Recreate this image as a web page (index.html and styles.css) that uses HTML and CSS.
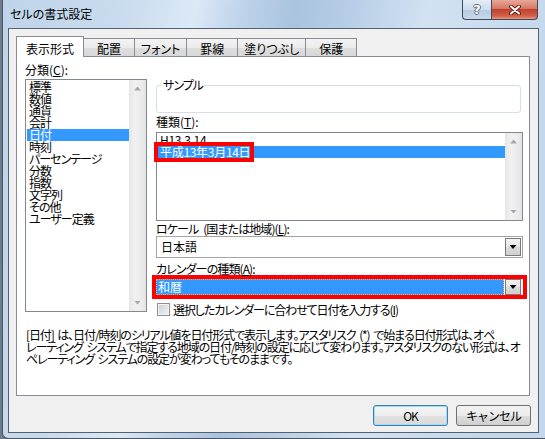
FILE: index.html
```html
<!DOCTYPE html>
<html lang="ja">
<head>
    <meta charset="UTF-8">
    <meta name="viewport" content="width=device-width, initial-scale=1.0">
    <title>セルの書式設定</title>
    <link rel="stylesheet" href="styles.css">
</head>
<body>
    <div class="window">
        <div class="titlebar">
            <span class="title">セルの書式設定</span>
            <div class="caption-buttons">
                <div class="cap-btn help">?</div>
                <div class="cap-btn close">
                    <svg width="12" height="10" viewBox="0 0 12 10">
                        <path d="M2 1.5 L10 8.5 M10 1.5 L2 8.5" stroke="#6b1e14" stroke-width="4" stroke-linecap="round"/>
                        <path d="M2 1.5 L10 8.5 M10 1.5 L2 8.5" stroke="#fff" stroke-width="2" stroke-linecap="round"/>
                    </svg>
                </div>
            </div>
        </div>

        <div class="client">
            <div class="tabs">
                <div class="tab active">表示形式</div>
                <div class="tab">配置</div>
                <div class="tab">フォント</div>
                <div class="tab">罫線</div>
                <div class="tab">塗りつぶし</div>
                <div class="tab">保護</div>
            </div>

            <div class="panel">
                <div class="cols">
                    <div class="col-left">
                        <div class="label cat-label">分類(<u>C</u>):</div>
                        <div class="listbox categories">
                            <ul class="items">
                                <li>標準</li>
                                <li>数値</li>
                                <li>通貨</li>
                                <li>会計</li>
                                <li class="selected">日付</li>
                                <li>時刻</li>
                                <li>パーセンテージ</li>
                                <li>分数</li>
                                <li>指数</li>
                                <li>文字列</li>
                                <li>その他</li>
                                <li>ユーザー定義</li>
                            </ul>
                            <div class="scrollbar">
                                <span class="sb-btn up"></span>
                                <span class="sb-btn down"></span>
                            </div>
                        </div>
                    </div>

                    <div class="col-right">
                        <fieldset class="sample">
                            <legend>サンプル</legend>
                            <div class="sample-body"></div>
                        </fieldset>

                        <div class="label type-label">種類(<u>T</u>):</div>
                        <div class="listbox types">
                            <ul class="items">
                                <li>H13.3.14</li>
                                <li class="selected"><span class="mark">平成13年3月14日</span></li>
                            </ul>
                            <div class="scrollbar">
                                <span class="sb-btn up"></span>
                                <span class="sb-btn down"></span>
                            </div>
                        </div>

                        <div class="label locale-label">ロケール (国または地域)(<u>L</u>):</div>
                        <div class="combo">
                            <span class="combo-text">日本語</span>
                            <span class="drop"></span>
                        </div>

                        <div class="label calendar-label">カレンダーの種類(<u>A</u>):</div>
                        <div class="combo marked">
                            <span class="combo-text selected">和暦</span>
                            <span class="drop"></span>
                        </div>

                        <label class="check">
                            <span class="box"></span>
                            <span>選択したカレンダーに合わせて日付を入力する(<u>I</u>)</span>
                        </label>
                    </div>
                </div>

                <p class="note">
                    [日付] は、日付/時刻のシリアル値を日付形式で表示します。アスタリスク (*) で始まる日付形式は、オペ<br>
                    レーティング システムで指定する地域の日付/時刻の設定に応じて変わります。アスタリスクのない形式は、オ<br>
                    ペレーティング システムの設定が変わってもそのままです。
                </p>
            </div>

            <div class="buttons">
                <button class="btn default">OK</button>
                <button class="btn">キャンセル</button>
            </div>
        </div>
    </div>
</body>
</html>
```

FILE: styles.css
```css
* {
    box-sizing: border-box;
}

body {
    margin: 0;
    background: #6d7b8a;
    font-family: "Noto Sans CJK JP", sans-serif;
    font-size: 12px;
    line-height: 12px;
    color: #000;
    font-feature-settings: "palt";
    overflow: hidden;
}

/* Window frame */
.window {
    margin-left: 2px;
    height: 439px;
    display: flex;
    flex-direction: column;
    border-left: 1px solid #4a5663;
    border-bottom: 1px solid #4a5663;
    border-bottom-left-radius: 6px;
    background: linear-gradient(100deg, #bfd4ea 0, #c9dbee 120px, #dce9f6 190px, #c2d6ec 230px, #a9c3df 290px, #b7cde6 340px, #d2e2f2 420px, #c4d8ed 545px);
}

.titlebar {
    height: 28px;
    display: flex;
    align-items: flex-start;
    padding-left: 7px;
}

.title {
    margin-top: 8px;
    font-size: 12px;
}

.caption-buttons {
    margin-left: auto;
    margin-right: 7px;
    display: flex;
}

.cap-btn {
    height: 20px;
    border: 1px solid #3d4a5a;
    border-top: none;
    display: flex;
    align-items: center;
    justify-content: center;
}

.cap-btn.help {
    width: 29px;
    border-right: none;
    border-bottom-left-radius: 4px;
    background: linear-gradient(#e4edf7, #cddcec 50%, #b7cbe2 51%, #c8d8ea);
    color: #fff;
    font-family: "DejaVu Sans", sans-serif;
    font-weight: bold;
    font-size: 13px;
    text-shadow: 1px 0 #5d6b7b, -1px 0 #5d6b7b, 0 1px #5d6b7b, 0 -1px #5d6b7b;
}

.cap-btn.close {
    width: 47px;
    border-bottom-right-radius: 4px;
    background: linear-gradient(#e9a797, #d47866 45%, #c2412e 50%, #d2604b 85%, #e49a86);
}

/* Dialog body */
.client {
    flex: 1;
    margin: 0 6px 5px 5px;
    border: 1px solid #55616e;
    background: #f0f0f0;
    display: flex;
    flex-direction: column;
}

.tabs {
    display: flex;
    align-items: flex-end;
    height: 20px;
    margin: 7px 0 0 7px;
}

.tab {
    height: 18px;
    min-width: 52px;
    padding: 4px 6px 0;
    text-align: center;
    border: 1px solid #898c95;
    border-bottom: none;
    background: linear-gradient(#f3f3f3, #ebebeb 50%, #dedede 51%, #d8d8d8);
}

.tab + .tab {
    margin-left: -1px;
}

.tab.active {
    position: relative;
    z-index: 1;
    height: 21px;
    padding: 6px 9px 0;
    margin-bottom: -1px;
    background: #fff;
}

.panel {
    height: 340px;
    margin: 0 8px 0 7px;
    padding: 7px 6px 0 8px;
    border: 1px solid #898c95;
    background: #fff;
}

.cols {
    display: flex;
    gap: 9px;
}

.col-left {
    width: 122px;
}

.col-right {
    flex: 1;
}

.label {
    height: 12px;
    white-space: nowrap;
}

.cat-label {
    margin-bottom: 3px;
}

.type-label {
    margin: 3px 0 4px;
}

.locale-label {
    margin: 2px 0 1px;
    letter-spacing: -0.9px;
    word-spacing: 3px;
}

.calendar-label {
    margin-top: 5px;
    letter-spacing: -0.9px;
}

/* List boxes */
.listbox {
    display: flex;
    border: 1px solid #828790;
    background: #fff;
}

.listbox.categories {
    height: 233px;
    letter-spacing: -1px;
}

.listbox.types {
    height: 89px;
    letter-spacing: -0.3px;
}

.items {
    flex: 1;
    list-style: none;
    margin: 0;
    padding: 1px 0 0 1px;
}

.items li {
    height: 12px;
    padding: 0 2px;
    white-space: nowrap;
}

.items li.selected {
    background: #3399ff;
    color: #fff;
}

.types .items li.selected {
    padding-left: 0;
}

.mark {
    display: inline-block;
    height: 12px;
    padding-left: 2px;
    outline: 4px solid #f00;
}

.scrollbar {
    width: 17px;
    display: flex;
    flex-direction: column;
    justify-content: space-between;
    background: linear-gradient(90deg, #e6e6e6, #f1f1f1 35%, #ececec 70%, #e4e4e4);
}

.sb-btn {
    height: 17px;
    display: flex;
    align-items: center;
    justify-content: center;
}

.sb-btn::after {
    content: "";
    width: 7px;
    height: 4px;
    background: #a7a7a7;
}

.sb-btn.up::after {
    clip-path: polygon(50% 0, 100% 100%, 0 100%);
}

.sb-btn.down::after {
    clip-path: polygon(0 0, 100% 0, 50% 100%);
}

/* Sample group box */
.sample {
    margin: 15px 2px 0 0;
    padding: 0 0 0 5px;
    min-width: 0;
    border: 1px solid #d5dfe5;
    border-radius: 3px;
}

.sample legend {
    padding: 0 1px;
    line-height: 12px;
    letter-spacing: -1px;
}

.sample-body {
    height: 21px;
}

/* Combo boxes */
.combo {
    height: 22px;
    display: flex;
    padding: 1px;
    border: 1px solid #a5a5a5;
    background: #fff;
}

.combo-text {
    flex: 1;
    display: flex;
    align-items: center;
    padding-left: 3px;
}

.drop {
    width: 16px;
    display: flex;
    align-items: center;
    justify-content: center;
    border: 1px solid #7a7a7a;
    background: linear-gradient(#f3f3f3, #e6e6e6 50%, #d9d9d9 51%, #d0d0d0);
}

.drop::after {
    content: "";
    width: 7px;
    height: 4px;
    background: #000;
    clip-path: polygon(0 0, 100% 0, 50% 100%);
}

.combo.marked {
    height: 24px;
    margin: 0 -4px;
    padding: 0 2px 0 0;
    border: 4px solid #f00;
}

.combo-text.selected {
    margin-right: 1px;
    padding-left: 2px;
    background: #3399ff;
    color: #fff;
    outline: 1px dotted #f2a955;
    outline-offset: -1px;
}

/* Check box */
.check {
    display: flex;
    align-items: center;
    gap: 3px;
    height: 13px;
    margin: 4px 0 0 1px;
    white-space: nowrap;
    letter-spacing: -1.1px;
}

.check .box {
    width: 13px;
    height: 13px;
    border: 1px solid #8f8f8f;
    background: linear-gradient(135deg, #c9ced4, #f3f3f3);
    box-shadow: inset 0 0 0 1px #f4f4f4;
}

.note {
    margin: 13px 0 0 1px;
    white-space: nowrap;
    letter-spacing: -1.1px;
    word-spacing: 2px;
}

/* Dialog buttons */
.buttons {
    display: flex;
    justify-content: flex-end;
    gap: 8px;
    margin-top: 9px;
    padding-right: 7px;
}

.btn {
    width: 75px;
    height: 21px;
    padding: 0;
    border: 1px solid #707070;
    border-radius: 3px;
    background: linear-gradient(#f2f2f2, #ebebeb 50%, #dddddd 51%, #cfcfcf);
    font-family: inherit;
    font-size: 12px;
    line-height: 12px;
    letter-spacing: -1px;
    color: #000;
}

.btn.default {
    border-color: #3c7fb1;
    box-shadow: inset 0 0 0 1px #9fdcf5;
    background: linear-gradient(#f4f4f4, #eeeeee 50%, #e2e2e2 51%, #d9d9d9);
}
```
